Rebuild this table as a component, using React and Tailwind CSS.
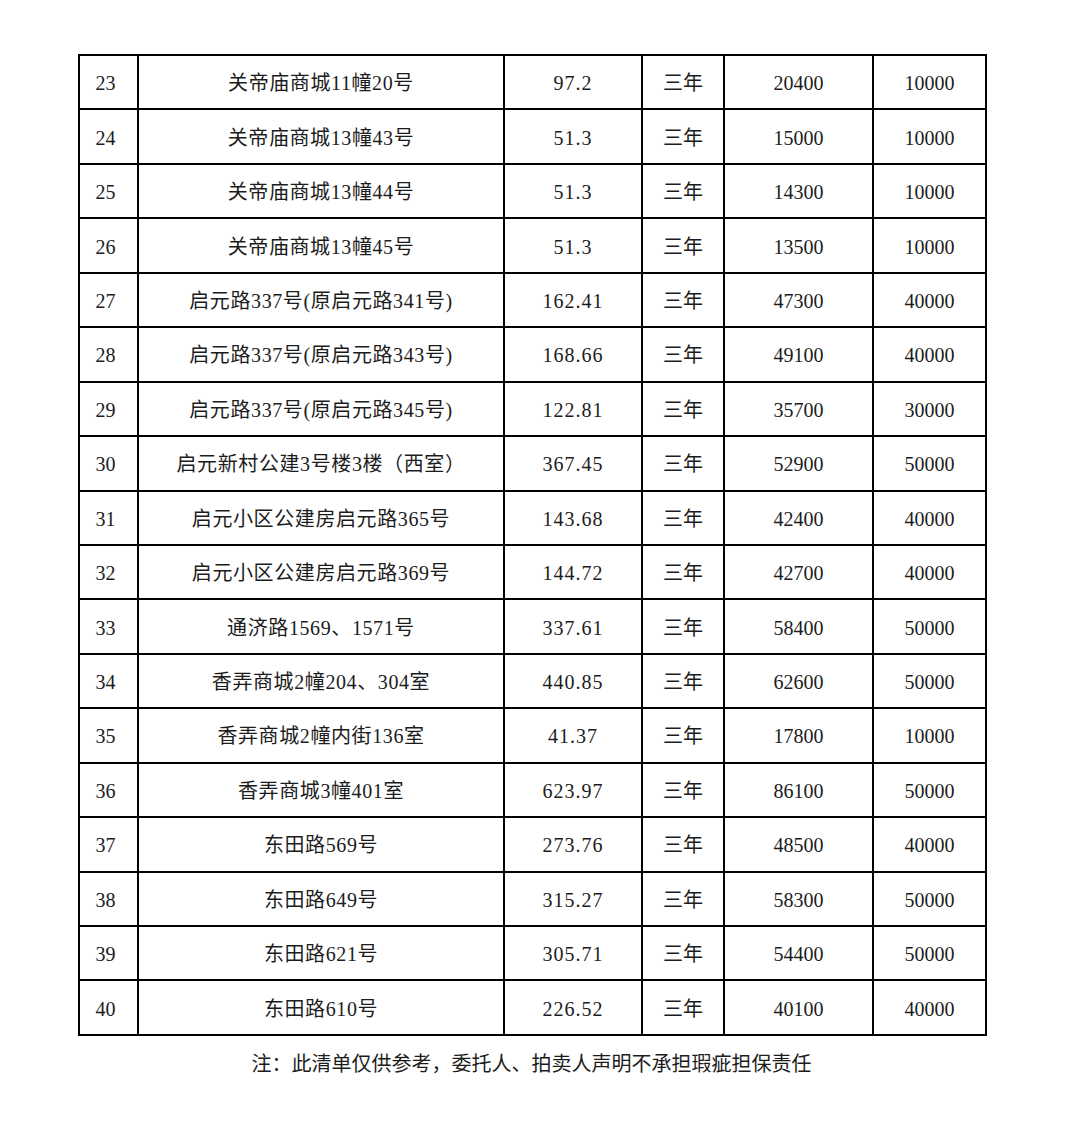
import React from "react";

const rows = [
  ["23", "关帝庙商城11幢20号", "97.2", "三年", "20400", "10000"],
  ["24", "关帝庙商城13幢43号", "51.3", "三年", "15000", "10000"],
  ["25", "关帝庙商城13幢44号", "51.3", "三年", "14300", "10000"],
  ["26", "关帝庙商城13幢45号", "51.3", "三年", "13500", "10000"],
  ["27", "启元路337号(原启元路341号)", "162.41", "三年", "47300", "40000"],
  ["28", "启元路337号(原启元路343号)", "168.66", "三年", "49100", "40000"],
  ["29", "启元路337号(原启元路345号)", "122.81", "三年", "35700", "30000"],
  ["30", "启元新村公建3号楼3楼（西室）", "367.45", "三年", "52900", "50000"],
  ["31", "启元小区公建房启元路365号", "143.68", "三年", "42400", "40000"],
  ["32", "启元小区公建房启元路369号", "144.72", "三年", "42700", "40000"],
  ["33", "通济路1569、1571号", "337.61", "三年", "58400", "50000"],
  ["34", "香弄商城2幢204、304室", "440.85", "三年", "62600", "50000"],
  ["35", "香弄商城2幢内街136室", "41.37", "三年", "17800", "10000"],
  ["36", "香弄商城3幢401室", "623.97", "三年", "86100", "50000"],
  ["37", "东田路569号", "273.76", "三年", "48500", "40000"],
  ["38", "东田路649号", "315.27", "三年", "58300", "50000"],
  ["39", "东田路621号", "305.71", "三年", "54400", "50000"],
  ["40", "东田路610号", "226.52", "三年", "40100", "40000"],
];

const font = { fontFamily: '"Liberation Serif", "Noto Sans CJK SC", serif' };

export default function App() {
  return (
    <div className="w-[1080px] h-[1129px] bg-white text-[#1c1c1c]" style={font}>
      <div className="pt-[54px] pl-[78px]">
        <table className="table-fixed border-collapse border-2 border-black w-[907px] text-[20px]">
          <colgroup>
            <col className="w-[59px]" />
            <col className="w-[366px]" />
            <col className="w-[138px]" />
            <col className="w-[82px]" />
            <col className="w-[149px]" />
            <col className="w-[113px]" />
          </colgroup>
          <tbody>
            {rows.map((r) => (
              <tr key={r[0]} className="h-[54.45px]">
                <td className="border-2 border-black text-center p-0 pt-[2px] pr-[6px] leading-none">{r[0]}</td>
                <td className="border-2 border-black text-center p-0 pt-[2px] leading-none tracking-[0.6px]">{r[1]}</td>
                <td className="border-2 border-black text-center p-0 pt-[2px] leading-none tracking-[1px]">{r[2]}</td>
                <td className="border-2 border-black text-center p-0 pt-[2px] leading-none">{r[3]}</td>
                <td className="border-2 border-black text-center p-0 pt-[2px] leading-none">{r[4]}</td>
                <td className="border-2 border-black text-center p-0 pt-[2px] leading-none">{r[5]}</td>
              </tr>
            ))}
          </tbody>
        </table>
        <div className="w-[907px] text-center text-[20px] mt-[18px] leading-none">
          注：此清单仅供参考，委托人、拍卖人声明不承担瑕疵担保责任
        </div>
      </div>
    </div>
  );
}
